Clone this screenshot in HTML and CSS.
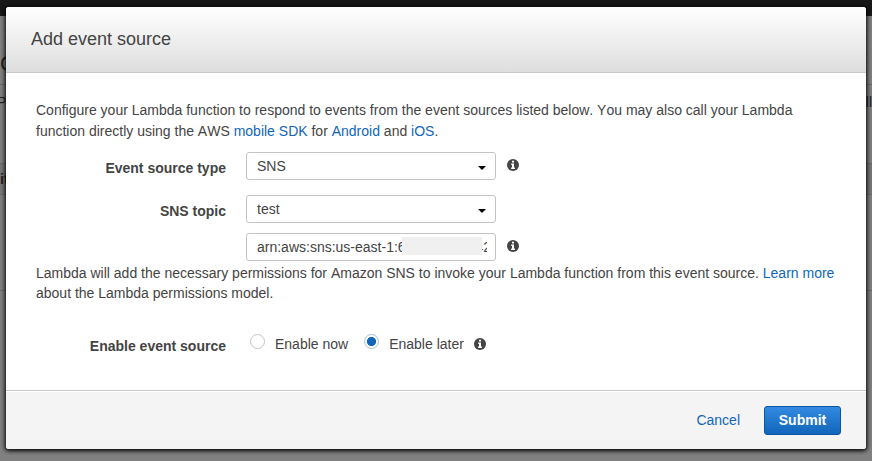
FILE: index.html
```html
<!DOCTYPE html>
<html lang="en">
<head>
<meta charset="utf-8">
<title>Add event source</title>
<link rel="stylesheet" href="styles.css">
</head>
<body>
<svg width="0" height="0" class="defs" aria-hidden="true">
  <symbol id="info" viewBox="0 0 12 12">
    <circle cx="6" cy="6" r="6" fill="#444"/>
    <path d="M5 1.7h2v1.8H5zM4.2 4.6H7v4h.9V10H4.1V8.6H5V6h-.8z" fill="#fff"/>
  </symbol>
</svg>
<div class="page">
  <div class="topbar"></div>
  <div class="page-title">C</div>
  <div class="page-row"><span>P</span><span class="row-end">ll</span></div>
  <div class="page-tabs">it</div>
  <div class="page-panel"></div>
</div>
<section class="modal">
  <header class="modal-header">Add event source</header>
  <main class="modal-body">
    <p class="intro">Configure your Lambda function to respond to events from the event sources listed below. You may also call your Lambda<br>function directly using the AWS <a>mobile SDK</a> for <a>Android</a> and <a>iOS</a>.</p>
    <div class="field">
      <label>Event source type</label>
      <div class="control select">SNS<i class="caret"></i></div>
      <svg class="info"><use href="#info"/></svg>
    </div>
    <div class="field topic">
      <label>SNS topic</label>
      <div class="control select">test<i class="caret"></i></div>
    </div>
    <div class="field arn">
      <label></label>
      <div class="control"><span class="clip">arn:aws:sns:us-east-1:6<span class="tail">42</span></span><i class="redact"></i></div>
      <svg class="info"><use href="#info"/></svg>
    </div>
    <p class="note">Lambda will add the necessary permissions for Amazon SNS to invoke your Lambda function from this event source. <a>Learn more</a><br>about the Lambda permissions model.</p>
    <div class="field enable">
      <label>Enable event source</label>
      <i class="radio"></i><span class="now">Enable now</span>
      <i class="radio checked"></i><span class="later">Enable later</span>
      <svg class="info"><use href="#info"/></svg>
    </div>
  </main>
  <footer class="modal-footer">
    <a>Cancel</a>
    <button class="submit">Submit</button>
  </footer>
</section>
</body>
</html>
```
FILE: styles.css
```css
* { box-sizing: border-box; }
body {
  margin: 0;
  height: 461px;
  overflow: hidden;
  position: relative;
  background: #808080;
  color: #444;
  font: 14px/21px "Liberation Sans", Arial, sans-serif;
  font-kerning: none;
}
p { margin: 0; white-space: nowrap; }
a { color: #1166bb; }
.defs { position: absolute; }

.page { color: #222; }
.topbar { height: 16px; background: #181818; }
.page-title { height: 69px; padding-top: 36px; border-bottom: 1px solid #6b6b6b; font-size: 22px; line-height: 24px; }
.page-row { display: flex; justify-content: space-between; height: 78px; padding-top: 7px; }
.page-row span { margin-left: -3px; }
.row-end { margin-right: 0; }
.page-tabs { height: 32px; padding-top: 5px; border: solid #6b6b6b; border-width: 1px 0; background: #787878; font-weight: bold; }
.page-panel { height: 96px; border-bottom: 1px solid #6b6b6b; }

.modal {
  position: absolute;
  left: 6px;
  top: 7px;
  width: 860px;
  height: 442px;
  display: flex;
  flex-direction: column;
  overflow: hidden;
  border-radius: 3px;
  background: #fff;
  box-shadow: 0 1px 4px 1px #000;
}
.modal-header {
  height: 66px;
  padding: 20px 25px;
  border-bottom: 1px solid #c8c8c8;
  background: linear-gradient(#fff, #dedede);
  font-size: 18px;
  line-height: 24px;
}
.modal-body { flex: 1; padding: 27px 30px 0; }
.field { display: flex; height: 28px; }
.field label { width: 190px; margin-right: 20px; padding-top: 6px; text-align: right; font-weight: bold; }
.intro { margin-bottom: 10px; }
.topic { margin-top: 15px; }
.arn { margin-top: 10px; }
.control {
  position: relative;
  width: 250px;
  height: 28px;
  padding: 0 10px;
  border: 1px solid #c4c4c4;
  border-radius: 3px;
  line-height: 27px;
}
.select { display: flex; justify-content: space-between; }
.caret { margin: 13px -1px 0 0; width: 8px; height: 4px; background: #000; clip-path: polygon(0 0, 100% 0, 50% 100%); }
.clip { display: flex; justify-content: space-between; width: 230px; overflow: hidden; white-space: nowrap; }
.tail { margin-right: -4px; }
.redact { position: absolute; left: 155px; top: 3px; width: 80px; height: 18px; background: #f0f0f0; }
.info { width: 12px; height: 12px; margin: 7px 0 0 11px; }
.note { margin-top: 2px; line-height: 20px; }
.enable { margin-top: 31px; }
.enable label { padding-top: 2px; margin-right: 24px; }
.radio { width: 15px; height: 15px; border: 1px solid #c4c4c4; border-radius: 50%; }
.checked { border-color: #a9bfd7; background: radial-gradient(circle, #1166bb 4.2px, #fff 4.9px); }
.now { margin: 0 16px 0 10px; }
.later { margin-left: 10px; }
.enable .info { margin: 4px 0 0 10px; }
.modal-footer {
  display: flex;
  justify-content: flex-end;
  height: 59px;
  padding: 14px 25px 0;
  border-top: 1px solid #c8c8c8;
  box-shadow: inset 0 1px #fff;
  background: #f4f4f4;
}
.modal-footer a { margin: 5px 24px 0 0; }
.submit {
  width: 77px;
  height: 29px;
  margin-top: 1px;
  padding: 0;
  border: 1px solid #0753a5;
  border-radius: 3px;
  background: linear-gradient(#338ae0, #1166bb);
  color: #fff;
  font: bold 14px/27px "Liberation Sans", Arial, sans-serif;
}
```
